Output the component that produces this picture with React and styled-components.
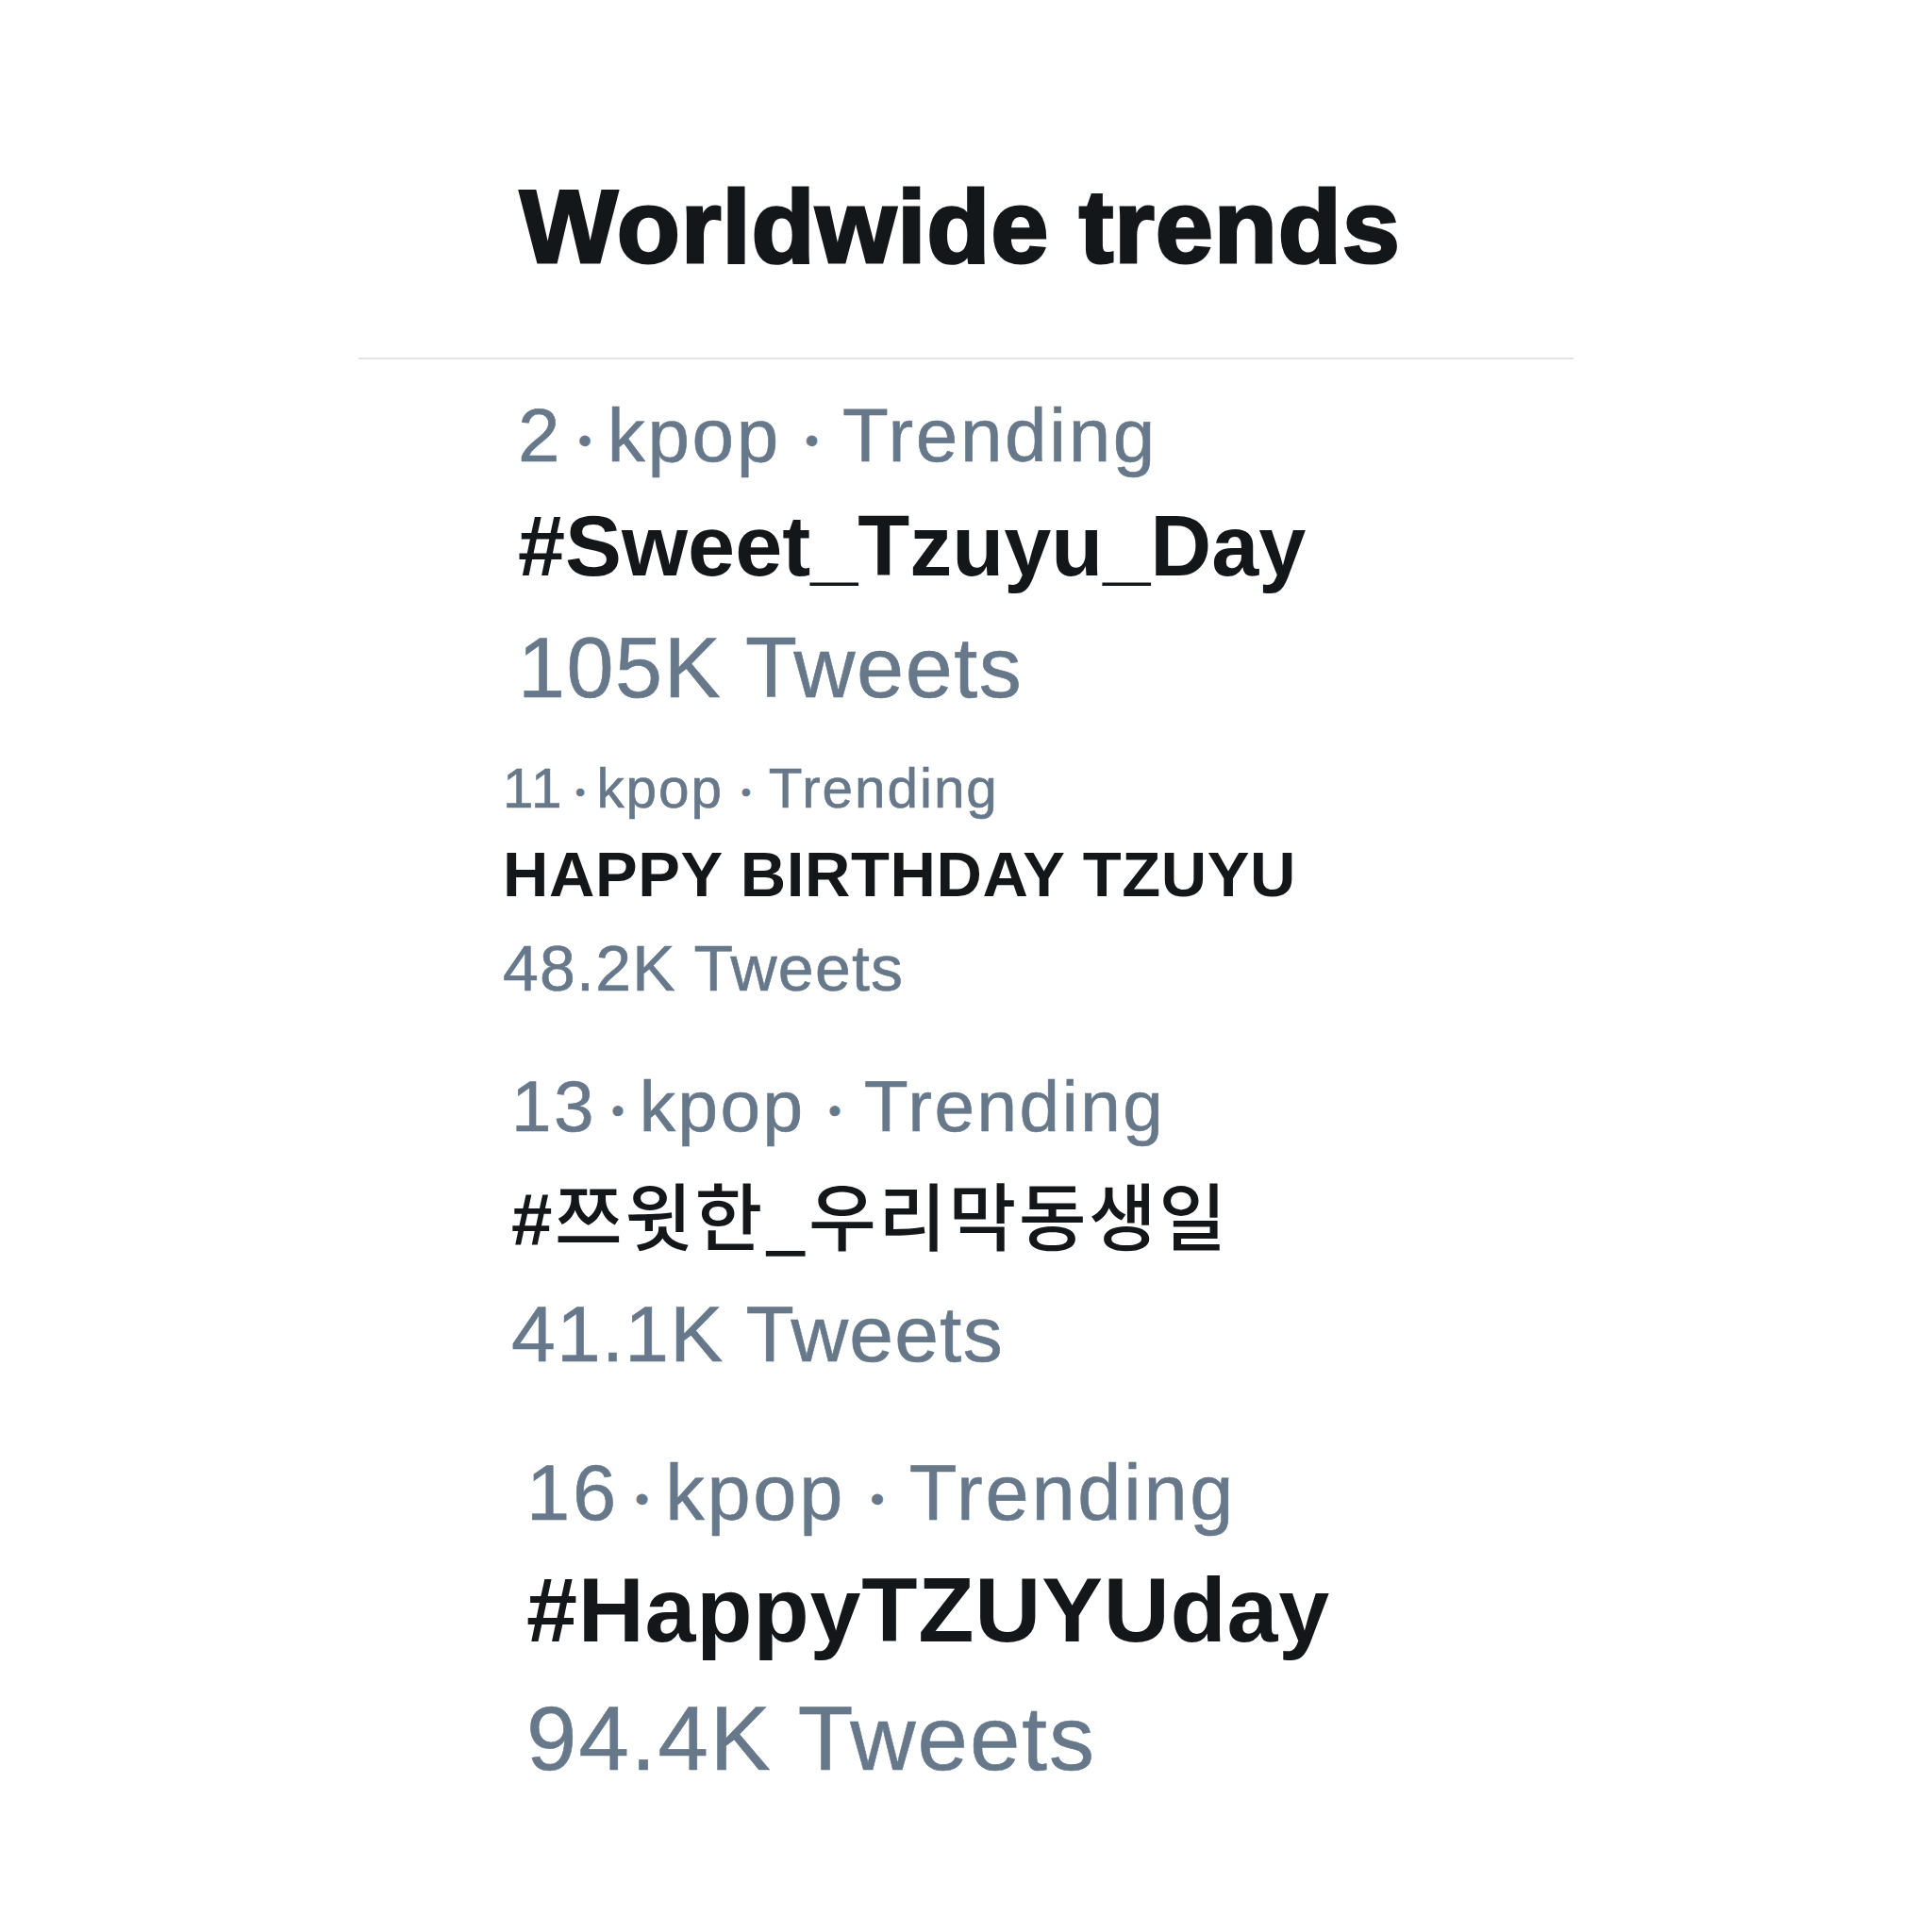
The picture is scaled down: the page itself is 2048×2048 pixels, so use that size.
import React from "react"
import styled, { createGlobalStyle } from "styled-components"

const GlobalStyle = createGlobalStyle`
  html, body {
    margin: 0;
    padding: 0;
    background: #ffffff;
  }
  body {
    font-family: "Liberation Sans", Arial, "Noto Sans CJK KR", sans-serif;
  }
`

const Page = styled.div`
  width: 2048px;
  min-height: 2048px;
  background: #ffffff;
  display: flex;
  flex-direction: column;
  padding-top: 185px;
  box-sizing: border-box;
`

const Title = styled.h2`
  margin: 0 0 0 551px;
  font-size: 110px;
  line-height: 1;
  font-weight: 700;
  color: #14171a;
  -webkit-text-stroke: 3px #14171a;
  letter-spacing: 0.8px;
`

const Divider = styled.hr`
  margin: 84px 0 0 380px;
  width: 1288px;
  height: 2px;
  border: none;
  background: #dfe3ea;
`

const TrendList = styled.div`
  display: flex;
  flex-direction: column;
`

const TrendItem = styled.div`
  display: flex;
  flex-direction: column;
  align-items: flex-start;
  margin-top: ${(p) => p.$top}px;
  margin-left: ${(p) => p.$indent}px;
`

const Meta = styled.div`
  font-size: ${(p) => p.$size}px;
  line-height: 1;
  color: #66788a;
  letter-spacing: 0.033em;
  white-space: nowrap;
  -webkit-text-stroke: 0.6px #66788a;
`

const Sep = styled.span`
  display: inline-block;
  font-size: 0.5em;
  vertical-align: 0.2em;
  letter-spacing: 0;
  margin: 0 ${(p) => (p.$tight ? 0.42 : 0.64)}em;
`

const Name = styled.div`
  margin-top: ${(p) => p.$gap}px;
  font-size: ${(p) => p.$size}px;
  line-height: 1;
  font-weight: 700;
  color: #14171a;
  letter-spacing: ${(p) => p.$spacing || 0}px;
  white-space: nowrap;
`

const Hangul = styled.span`
  font-family: "Noto Sans CJK KR", sans-serif;
  font-weight: 500;
`

const Count = styled.div`
  margin-top: ${(p) => p.$gap}px;
  font-size: ${(p) => p.$size}px;
  line-height: 1;
  color: #66788a;
  letter-spacing: ${(p) => p.$spacing || 0}px;
  white-space: nowrap;
  -webkit-text-stroke: 0.6px #66788a;
`

const trends = [
  {
    rank: 2,
    name: "#Sweet_Tzuyu_Day",
    count: "105K",
    indent: 549,
    top: 41,
    meta: 80,
    nameSize: 90,
    nameGap: 32,
    countSize: 90,
    countGap: 39,
    countSpacing: 1.5,
  },
  {
    rank: 11,
    name: "HAPPY BIRTHDAY TZUYU",
    count: "48.2K",
    indent: 533,
    top: 54,
    meta: 58.5,
    nameSize: 67,
    nameGap: 27,
    nameSpacing: 0.6,
    countSize: 68,
    countGap: 32,
    countSpacing: 1.2,
  },
  {
    rank: 13,
    name: "#",
    hangul: "쯔윗한_우리막동생일",
    count: "41.1K",
    indent: 542,
    top: 75,
    meta: 76.5,
    nameSize: 78,
    nameGap: 36,
    nameSpacing: 2.5,
    countSize: 84,
    countGap: 40,
    countSpacing: 1.2,
  },
  {
    rank: 16,
    name: "#HappyTZUYUday",
    count: "94.4K",
    indent: 558,
    top: 85,
    meta: 83,
    nameSize: 97,
    nameGap: 34,
    nameSpacing: 0.8,
    countSize: 96,
    countGap: 40,
    countSpacing: 2,
  },
]

const App = () => {
  return (
    <Page>
      <GlobalStyle />
      <Title>Worldwide trends</Title>
      <Divider />
      <TrendList>
        {trends.map((t) => (
          <TrendItem key={t.rank} $top={t.top} $indent={t.indent}>
            <Meta $size={t.meta}>
              {t.rank}
              <Sep $tight>•</Sep>
              kpop
              <Sep>•</Sep>
              Trending
            </Meta>
            <Name $gap={t.nameGap} $size={t.nameSize} $spacing={t.nameSpacing}>
              {t.name}
              {t.hangul && <Hangul>{t.hangul}</Hangul>}
            </Name>
            <Count $gap={t.countGap} $size={t.countSize} $spacing={t.countSpacing}>
              {t.count} Tweets
            </Count>
          </TrendItem>
        ))}
      </TrendList>
    </Page>
  )
}

export default App
